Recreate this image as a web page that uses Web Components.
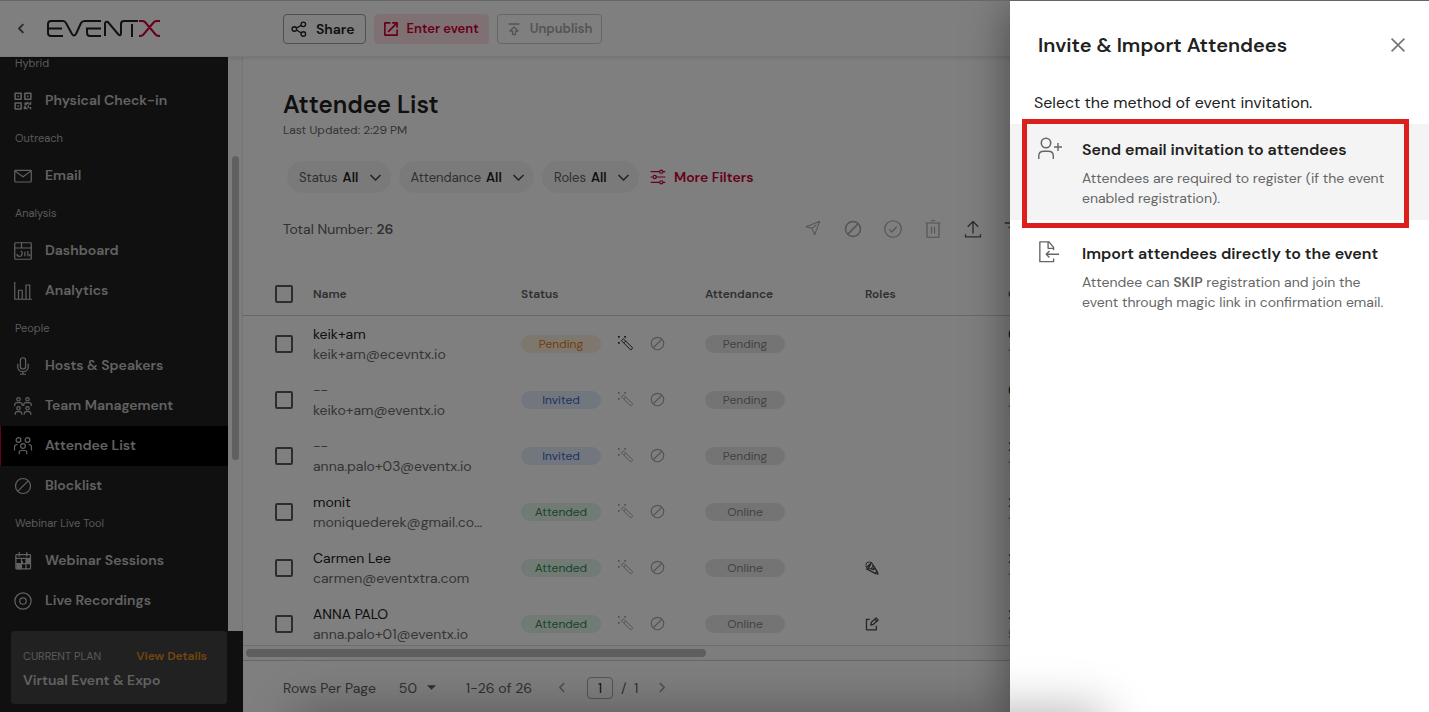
<!DOCTYPE html>
<html lang="en">
<head>
<meta charset="utf-8">
<title>EventX – Attendee List</title>
<style>
  html, body { height: 100%; margin: 0; }
  body { font-family: "DM Sans", Inter, "Liberation Sans", sans-serif; font-size: 14px; background: #fff; color: #212121; overflow: hidden; }
</style>
</head>
<body>
<event-admin></event-admin>

<script>
const define = (name, html, setup) => {
  const template = document.createElement('template');
  template.innerHTML = html;
  customElements.define(name, class extends HTMLElement {
    connectedCallback() {
      if (this.shadowRoot) return;
      this.attachShadow({ mode: 'open' }).append(template.content.cloneNode(true));
      if (setup) setup(this, this.shadowRoot);
    }
  });
};

/* Line icons on a 24-unit grid */
const ICONS = {
  back: '<path d="M15 5l-7 7 7 7" stroke-width="3"/>',
  next: '<path d="M9 4l8 8-8 8" stroke-width="3"/>',
  prev: '<path d="M15 4l-8 8 8 8" stroke-width="3"/>',
  down: '<path d="M4 8l8 8 8-8" stroke-width="2.6"/>',
  caret: '<path d="M2 7h20L12 17z" fill="currentColor" stroke="none"/>',
  share: '<circle cx="5" cy="12" r="3.4"/><circle cx="18.500" cy="5" r="3.400"/><circle cx="18.500" cy="19.500" r="3.400"/><path d="M8 10.500l7.500-4M8 13.500l7.500 4.500"/>',
  enter: '<path d="M11 1.500H1.500v21h21V13M14 1.500h8.500V10M22.500 1.500L7 17" stroke-width="2.800"/>',
  unpublish: '<path d="M1 2h22M9 23v-7H4l8-8 8 8h-5v7z" stroke-width="2.600"/>',
  qr: '<path d="M1.500 1.500h8v8h-8zM14.500 1.500h8v8h-8zM1.500 14.500h8v8h-8z" stroke-width="2"/><path d="M4.500 4.500h2v2h-2zM17.500 4.500h2v2h-2zM4.500 17.500h2v2h-2zM14 14h3v-1h2v3h-2v2h-3zM21 13h2v4h-4v-2h2zM13 19h3v2h2v2h-5zM18 18h2v2h3v3h-2v-2h-3z" fill="currentColor" stroke="none"/>',
  mail: '<rect x="1" y="4.500" width="22" height="15.500" rx="1"/><path d="M1.500 5.500L12 13l10.500-7.500"/>',
  dashboard: '<rect x="1" y="1" width="22" height="22" rx="1"/><path d="M1 8h22M10 1v7M9 12c4 2 1 8-2 7-2 0-3-1-3-3M14.500 13v6M18.500 12v7M21 16v3"/>',
  chart: '<path d="M1 0v23h23M6 23V11h5v12M16 23V4h5v19"/>',
  mic: '<rect x="8.500" y="1" width="7" height="15" rx="3.500"/><path d="M5 9v4c0 9 14 9 14 0V9M12 19v4M8 23h8"/>',
  team: '<circle cx="6" cy="3" r="2.300"/><circle cx="18" cy="3" r="2.300"/><circle cx="6" cy="15" r="2.300"/><circle cx="18" cy="15" r="2.300"/><path d="M1 12V9.500Q1.500 7.500 4 7.500h4q2.500 0 3 2V12M13 12V9.500q.5-2 3-2h4q2.500 0 3 2V12M1.500 23.500q0-4 2.500-4h4q2.500 0 2.500 4M13.500 23.500q0-4 2.500-4h4q2.500 0 2.500 4"/>',
  people: '<circle cx="6" cy="4" r="3.200"/><circle cx="18" cy="4" r="3.200"/><circle cx="12" cy="12" r="3.200"/><path d="M.7 18v-5q0-3 4-3M23.300 18v-5q0-3-4-3M7 23v-3q0-2 3-2h4q3 0 3 2v3"/>',
  block: '<circle cx="12" cy="12" r="10"/><path d="M5.500 18.500l13-13"/>',
  calendar: '<rect x="2.500" y="3.500" width="19.500" height="19" rx="1"/><path d="M7 0v6M17 0v6M2 8.500h20M10 9v14M16 9v14M2 15.500h20"/><path d="M3 16h7v7H3zM16 9h6v7h-6zM10 12h2v4h-2z" fill="currentColor" stroke="none"/>',
  record: '<circle cx="12" cy="12" r="10.800"/><circle cx="12" cy="12" r="4.300"/>',
  sliders: '<path d="M1 4h14M19 4h4M1 12h3M9 12h14M1 20h14M19 20h4"/><circle cx="17" cy="4" r="2.400"/><circle cx="7" cy="12" r="2.400"/><circle cx="17" cy="20" r="2.400"/>',
  send: '<path d="M1.500 10L22 2l-7.500 20-4-9.500zM10.500 12.500L17 7"/>',
  check: '<circle cx="12" cy="12" r="11"/><path d="M7 12.500l3.500 3.500L17 9"/>',
  trash: '<path d="M4 4v19h16V4M2 4h20M9 1h6M10 9v9M14 9v9"/>',
  upload: '<path d="M12 18V2M5 9l7-7 7 7M2 19v3.500h20V19" stroke-width="1.800"/>',
  filter: '<path d="M1 4h22M6 10h12M10 16h4" stroke-width="2"/>',
  wand: '<path d="M5.500 7.500L8.500 4.500L23.500 19l-3 3.500zM9.500 11l3-3"/><path d="M0 0h2.800v2.800H0zM10 0h2.800v2.800H10zM0 9.500h2.800v2.800H0z" fill="currentColor" stroke="none"/>',
  microphone: '<circle cx="7.500" cy="7.500" r="6"/><path d="M3.500 10.500L11 3M6 12l4-7M2 13l17 9M13.500 6.500L22 20M10 13l5 1.500 1-5M18 19l5 4" stroke-width="2.400"/>',
  edit: '<path d="M8 4H2.500v18h17v-7M10 14l1-5 8-7.500 3.500 3.500-8 7.500zM17 4l3.500 3.500" stroke-width="2.200"/>',
  close: '<path d="M1 1l22 22M23 1L1 23" stroke-width="2.800"/>',
  invite: '<circle cx="8" cy="6" r="4.700"/><path d="M.8 22v-3c0-3 2-4.700 5-4.700h4.500c3 0 5 1.700 5 4.700v3M20 6v8M16 10h8" stroke-width="1.400"/>',
  import: '<path d="M17 19v3.500H2V1h10l5 6v3M11 1v7h6M23 14.500H9M12.500 11L9 14.500l3.500 3.500" stroke-width="1.500"/>'
};

customElements.define('ex-icon', class extends HTMLElement {
  connectedCallback() {
    if (this.shadowRoot) return;
    const size = this.getAttribute('size') || 20;
    const width = this.getAttribute('stroke') || 1.6;
    this.attachShadow({ mode: 'open' }).innerHTML = `
      <style>:host{display:inline-flex;flex:none} svg{display:block;overflow:visible}</style>
      <svg aria-hidden="true" width="${size}" height="${size}" viewBox="0 0 24 24" fill="none" stroke="currentColor" stroke-width="${width}" stroke-linejoin="round">${ICONS[this.getAttribute('name')]}</svg>`;
  }
});

define('ex-logo', `
  <style>:host{display:block} svg{display:block}</style>
  <svg width="113" height="17" viewBox="0 0 113 17" fill="none" stroke="#212121" stroke-width="2" role="img" aria-label="EventX">
    <path d="M16 1H4Q1 1 1 4v9q0 3 3 3h12M1 8.500h14M16 1q2 0 3 2l6 11q2 3 4 0l5-11q1-2 4-2h16M54 8.500H40v4q0 3.500 3 3.500h11M58 16V4q0-3 3-2l10 12q3 3 3-1V4q0-3 3-3h14M85 4v13"/>
    <path d="M92 1h3q2 0 3 1l11 13q1 1 4 1M113 1h-3q-2 0-3 1L96 15q-1 1-4 1" stroke="#cc0033"/>
  </svg>`);

define('tool-button', `
  <style>
    :host{display:block}
    button{display:flex;align-items:center;gap:9px;height:30px;padding:0 10px 0 7px;border:1px solid #9e9e9e;border-radius:4px;background:none;font-family:inherit;font-size:14px;font-weight:600;color:#212121}
    :host([kind=accent]) button{border-color:#ffe0e8;background:#ffe0e8;color:#cc0033;padding:0 9px;font-size:13px}
    :host([kind=muted]) button{border-color:#ccc;color:#a8a8a8;padding:0 9px 0 10px;gap:10px;font-size:13px}
  </style>
  <button type="button"><slot name="icon"></slot><slot></slot></button>`,
  (el, root) => { root.querySelector('button').disabled = el.getAttribute('kind') === 'muted'; });

define('app-header', `
  <style>
    :host{display:flex;align-items:center;height:56px;background:#fff;border-bottom:1px solid #eee;box-shadow:0 1px 4px rgba(0,0,0,.12);position:relative;z-index:1;box-sizing:border-box}
    .brand{display:flex;align-items:center;gap:18px;width:243px;padding-left:14px;margin-right:40px;box-sizing:border-box}
    .back{display:flex;padding:0;border:0;background:none;color:#555}
    .tools{display:flex;gap:8px}
  </style>
  <div class="brand"><button class="back" aria-label="Back"><ex-icon name="back" size="15"></ex-icon></button><ex-logo></ex-logo></div>
  <div class="tools">
    <tool-button><ex-icon slot="icon" name="share" size="16" stroke="2"></ex-icon>Share</tool-button>
    <tool-button kind="accent"><ex-icon slot="icon" name="enter" size="14"></ex-icon>Enter event</tool-button>
    <tool-button kind="muted"><ex-icon slot="icon" name="unpublish" size="12"></ex-icon>Unpublish</tool-button>
  </div>`);

define('nav-item', `
  <style>
    :host{display:block;flex:none}
    a{display:flex;align-items:center;gap:13px;height:40px;padding-left:13px;border-left:1px solid transparent;color:#c4c4c4;text-decoration:none;font-size:14px;font-weight:600;box-sizing:border-box}
    span{padding-bottom:2px}
    :host([current]) a{background:#000;border-color:#cc0033}
  </style>
  <a href="#"><span><slot></slot></span></a>`,
  (el, root) => {
    const icon = document.createElement('ex-icon');
    icon.setAttribute('name', el.getAttribute('icon'));
    icon.setAttribute('size', 18);
    const link = root.querySelector('a');
    link.prepend(icon);
    if (el.hasAttribute('current')) link.setAttribute('aria-current', 'page');
  });

define('nav-heading', `
  <style>:host{display:block;flex:none;height:35px;line-height:34px;padding-left:15px;font-size:11px;color:#b4b4b4}</style>
  <slot></slot>`);

define('plan-card', `
  <style>
    :host{display:block;box-sizing:border-box;height:73px;padding:15px 20px 12px 12px;border-radius:4px;background:#424242;color:#b4b4b4}
    .top{display:flex;align-items:center;justify-content:space-between;height:20px;font-size:11px}
    a{color:#e08a1e;font-size:12px;font-weight:600;text-decoration:none}
    strong{display:block;margin-top:4px;font-size:14px;line-height:20px;font-weight:600;color:#c4c4c4}
  </style>
  <div class="top"><span>CURRENT PLAN</span><a href="#">View Details</a></div>
  <strong>Virtual Event &amp; Expo</strong>`);

define('side-nav', `
  <style>
    :host{display:flex;flex-direction:column;width:243px;flex:none;min-height:0}
    .body{display:flex;flex:1;min-height:0}
    nav{display:flex;flex-direction:column;justify-content:flex-end;flex:1;min-width:0;overflow:hidden;background:#212121;box-sizing:border-box;padding-bottom:10px}
    .track{width:15px;flex:none;box-sizing:border-box;padding:99px 3px 0 4px;background:#fafafa;border-right:1px solid #e8e8e8}
    .thumb{height:304px;border-radius:4px;background:#c1c1c1}
    footer{background:#212121;padding:0 16px 8px 11px}
  </style>
  <div class="body">
    <nav aria-label="Event">
      <nav-heading>Hybrid</nav-heading>
      <nav-item icon="qr">Physical Check-in</nav-item>
      <nav-heading>Outreach</nav-heading>
      <nav-item icon="mail">Email</nav-item>
      <nav-heading>Analysis</nav-heading>
      <nav-item icon="dashboard">Dashboard</nav-item>
      <nav-item icon="chart">Analytics</nav-item>
      <nav-heading>People</nav-heading>
      <nav-item icon="mic">Hosts &amp; Speakers</nav-item>
      <nav-item icon="team">Team Management</nav-item>
      <nav-item icon="people" current>Attendee List</nav-item>
      <nav-item icon="block">Blocklist</nav-item>
      <nav-heading>Webinar Live Tool</nav-heading>
      <nav-item icon="calendar">Webinar Sessions</nav-item>
      <nav-item icon="record">Live Recordings</nav-item>
    </nav>
    <div class="track"><div class="thumb"></div></div>
  </div>
  <footer><plan-card></plan-card></footer>`);

define('filter-chip', `
  <style>
    :host{display:block}
    label{display:flex;align-items:center;height:32px;padding:0 8px 0 12px;border-radius:16px;background:#f4f4f4;font-size:13px;color:#616161}
    select{appearance:none;border:0;background:none;margin:0 9px 0 5px;padding:0;font:inherit;font-weight:600;color:#212121}
    ex-icon{color:#484848}
  </style>
  <label><slot></slot><select><option>All</option></select><ex-icon name="down" size="15"></ex-icon></label>`);

define('page-head', `
  <style>
    :host{display:block;padding:34px 40px 8px}
    h1{margin:0;font-size:24px;line-height:28px;font-weight:600;color:#212121}
    p{margin:2px 0 0;font-size:12px;line-height:18px;color:#6a6a6a}
    .filters{display:flex;align-items:center;gap:8px;margin:22px 0 0 4px}
    .more{display:flex;align-items:center;gap:8px;margin-left:3px;padding:0;border:0;background:none;font:inherit;font-size:14px;font-weight:600;color:#cc0033}
    .bar{display:flex;align-items:center;height:72px;color:#616161}
    .bar b{font-weight:600}
    .count{width:520px;flex:none}
    .icons{display:flex;gap:20px}
    .icons button{display:flex;justify-content:center;width:20px;padding:0;border:0;background:none;color:#585858}
    .icons button:disabled{color:#a8a8a8}
  </style>
  <h1>Attendee List</h1>
  <p>Last Updated: 2:29 PM</p>
  <div class="filters">
    <filter-chip>Status</filter-chip><filter-chip>Attendance</filter-chip><filter-chip>Roles</filter-chip>
    <button class="more"><ex-icon name="sliders" size="16" stroke="1.8"></ex-icon>More Filters</button>
  </div>
  <div class="bar">
    <div class="count">Total Number: <b>26</b></div>
    <div class="icons">
      <button disabled aria-label="Send"><ex-icon name="send" size="16"></ex-icon></button>
      <button disabled aria-label="Block"><ex-icon name="block" size="18" stroke="2"></ex-icon></button>
      <button disabled aria-label="Approve"><ex-icon name="check" size="18"></ex-icon></button>
      <button disabled aria-label="Delete"><ex-icon name="trash" size="18"></ex-icon></button>
      <button aria-label="Export"><ex-icon name="upload" size="18"></ex-icon></button>
      <button aria-label="Sort"><ex-icon name="filter" size="18"></ex-icon></button>
    </div>
  </div>`);

define('status-pill', `
  <style>
    :host{display:block;box-sizing:border-box;width:80px;height:18px;border-radius:9px;text-align:center;font-size:12px;line-height:18px;background:#e8e8e8;color:#858585}
    :host([kind=Pending]){background:#faeedb;color:#e87a1c}
    :host([kind=Invited]){background:#e3eefa;color:#3a68c8}
    :host([kind=Attended]){background:#e3f4e9;color:#2f8a54}
  </style>
  <slot></slot>`);

const ROWS = [
  ['keik+am', 'keik+am@ecevntx.io', 'Pending', 'Pending', '', '06', '1'],
  ['--', 'keiko+am@eventx.io', 'Invited', 'Pending', '', '06', '1'],
  ['--', 'anna.palo+03@eventx.io', 'Invited', 'Pending', '', '29', '1'],
  ['monit', 'moniquederek@gmail.com', 'Attended', 'Online', '', '29', '1'],
  ['Carmen Lee', 'carmen@eventxtra.com', 'Attended', 'Online', 'microphone', '29', '1'],
  ['ANNA PALO', 'anna.palo+01@eventx.io', 'Attended', 'Online', 'edit', '29', '5']
];

define('attendee-table', `
  <style>
    :host{display:block;flex:1;min-height:0;overflow:hidden;border-bottom:1px solid #dadada}
    table{width:3050px;table-layout:fixed;border-collapse:collapse}
    th,td{padding:0;text-align:left;vertical-align:middle}
    th{height:42px;box-sizing:border-box;border-bottom:1px solid #d0d0d0;font-size:12px;font-weight:600;color:#616161}
    td{height:56px;line-height:20px}
    .pick{padding-left:32px}
    input{appearance:none;display:block;width:18px;height:18px;margin:0;border:2px solid #5a5a5a;border-radius:2px;box-sizing:border-box}
    .name,.mail,.none{font-size:14px}
    .mail{color:#6a6a6a;width:172px;overflow:hidden;text-overflow:ellipsis;white-space:nowrap}
    .name{color:#212121}
    .none{color:#6a6a6a}
    .state{display:flex;align-items:center;gap:17px;color:#a8a8a8}
    .state .on{color:#333}
    .role{color:#484848;display:flex}
    col.a{width:70px}col.b{width:208px}col.c{width:184px}col.d{width:160px}col.e{width:143px}
  </style>
  <table>
    <colgroup><col class="a"><col class="b"><col class="c"><col class="d"><col class="e"><col></colgroup>
    <thead><tr><th class="pick"><input type="checkbox" aria-label="Select all"></th><th>Name</th><th>Status</th><th>Attendance</th><th>Roles</th><th>Created</th></tr></thead>
    <tbody></tbody>
  </table>`,
  (el, root) => {
    root.querySelector('tbody').innerHTML = ROWS.map(([name, mail, status, attendance, role, date, time], i) => `
      <tr>
        <td class="pick"><input type="checkbox" aria-label="Select ${mail}"></td>
        <td><div class="${name === '--' ? 'none' : 'name'}">${name}</div><div class="mail">${mail}</div></td>
        <td><div class="state"><status-pill kind="${status}">${status}</status-pill><ex-icon class="${i ? '' : 'on'}" name="wand" size="15"></ex-icon><ex-icon name="block" size="15" stroke="2"></ex-icon></div></td>
        <td><status-pill>${attendance}</status-pill></td>
        <td>${role ? `<span class="role"><ex-icon name="${role}" size="14"></ex-icon></span>` : ''}</td>
        <td><div class="name">${date}</div><div class="mail">${time}</div></td>
      </tr>`).join('');
  });

define('table-pager', `
  <style>
    :host{display:block;flex:none}
    .track{height:15px;box-sizing:border-box;padding:3px 3px 0;background:#fafafa;border-bottom:1px solid #cfcfcf}
    .thumb{width:39%;height:8px;border-radius:4px;background:#bdbdbd}
    .bar{display:flex;align-items:center;height:51px;padding:2px 0 0 40px;box-sizing:border-box;color:#616161}
    .bar,select{font-size:14px}
    label{display:flex;align-items:center}
    select{appearance:none;border:0;background:none;margin:0 8px 0 23px;padding:0;font-family:inherit;color:#616161}
    .range{margin:0 24px 0 29px}
    button{display:flex;padding:0;border:0;background:none;color:#a0a0a0}
    input{width:26px;height:22px;box-sizing:border-box;margin:0 8px 0 18px;padding:0;border:1px solid #a8a8a8;border-radius:4px;background:none;text-align:center;font-family:inherit;font-size:14px;color:#212121}
    .of{margin-right:17px;white-space:pre}
  </style>
  <div class="track"><div class="thumb"></div></div>
  <div class="bar">
    <label>Rows Per Page<select><option>50</option></select><ex-icon name="caret" size="11"></ex-icon></label>
    <span class="range">1-26 of 26</span>
    <button aria-label="Previous page"><ex-icon name="prev" size="13"></ex-icon></button>
    <input aria-label="Page" value="1"><span class="of">/  1</span>
    <button aria-label="Next page"><ex-icon name="next" size="13"></ex-icon></button>
  </div>`);

define('invite-option', `
  <style>
    :host{display:block}
    button{display:flex;align-items:flex-start;gap:20px;width:100%;padding:16px 32px 12px 28px;border:0;background:none;text-align:left;font:inherit;color:#666}
    :host([active]) button{background:#f4f4f4}
    ::slotted(ex-icon){width:24px;margin-top:-3px}
    .title{display:block;font-size:16px;line-height:20px;font-weight:600;color:#212121;margin-bottom:8px;white-space:nowrap}
    .text{display:block;font-size:14px;line-height:20px}
  </style>
  <button type="button"><slot name="icon"></slot><span><span class="title"><slot name="title"></slot></span><span class="text"><slot></slot></span></span></button>`);

define('invite-drawer', `
  <style>
    :host{display:flex;flex-direction:column;background:#fff;box-shadow:0 8px 40px 4px rgba(0,0,0,.38)}
    header{display:flex;align-items:center;justify-content:space-between;height:88px;padding:0 24px 0 28px}
    h2{margin:0;font-size:20px;font-weight:600;line-height:28px;color:#212121}
    .close{display:flex;padding:0;border:0;background:none;color:#757575}
    p{margin:0 0 11px;padding:4px 24px 0;font-size:16px;line-height:20px;color:#212121}
    .options{display:flex;flex-direction:column;gap:8px;position:relative}
    .mark{position:absolute;top:-5px;left:12px;right:20px;height:109px;box-sizing:border-box;border:5px solid #dc1f1c;pointer-events:none}
    b{font-weight:600}
  </style>
  <header><h2>Invite &amp; Import Attendees</h2><button class="close" aria-label="Close"><ex-icon name="close" size="14"></ex-icon></button></header>
  <p>Select the method of event invitation.</p>
  <div class="options">
    <invite-option active><ex-icon slot="icon" name="invite" size="24"></ex-icon><span slot="title">Send email invitation to attendees</span>Attendees are required to register (if the event enabled registration).</invite-option>
    <invite-option><ex-icon slot="icon" name="import" size="22"></ex-icon><span slot="title">Import attendees directly to the event</span>Attendee can <b>SKIP</b> registration and join the<br>event through magic link in confirmation email.</invite-option>
    <div class="mark"></div>
  </div>`);

define('event-admin', `
  <style>
    :host{display:flex;flex-direction:column;position:relative;height:100vh;box-sizing:border-box;border-top:1px solid #666;overflow:hidden;background:#fff}
    .work{display:flex;flex:1;min-height:0}
    main{display:flex;flex-direction:column;flex:1;min-width:0;overflow:hidden}
    .scrim{position:absolute;inset:0;background:rgba(0,0,0,.5);z-index:2}
    invite-drawer{position:absolute;top:0;right:0;bottom:0;width:419px;z-index:3}
    .glow{position:absolute;top:100%;left:21%;right:23%;height:60px;z-index:4;box-shadow:0 0 48px 4px rgba(0,0,0,.28);pointer-events:none}
  </style>
  <app-header></app-header>
  <div class="work">
    <side-nav></side-nav>
    <main><page-head></page-head><attendee-table></attendee-table><table-pager></table-pager></main>
  </div>
  <div class="scrim"></div>
  <invite-drawer></invite-drawer>
  <div class="glow"></div>`);
</script>
</body>
</html>
